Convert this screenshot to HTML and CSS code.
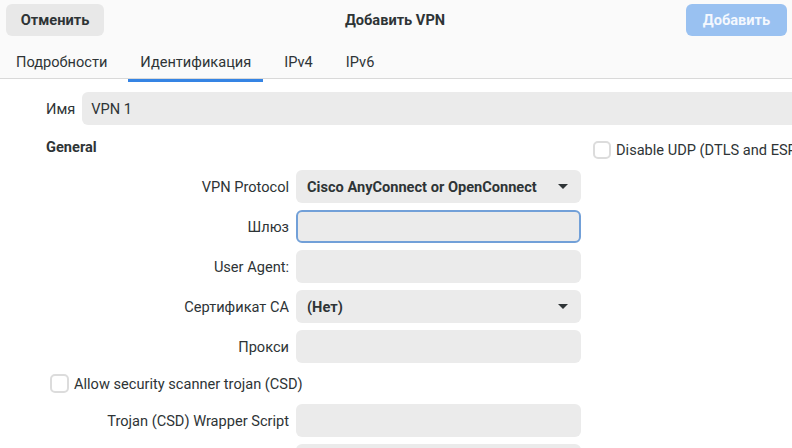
FILE: index.html
```html
<!DOCTYPE html>
<html lang="ru">
<head>
<meta charset="utf-8">
<title>Добавить VPN</title>
<link rel="stylesheet" href="styles.css">
</head>
<body>
<div class="window">
  <header class="header">
    <div class="titlebar">
      <button class="btn btn-cancel">Отменить</button>
      <div class="title">Добавить VPN</div>
      <button class="btn btn-add">Добавить</button>
    </div>
    <nav class="tabs">
      <div class="tab">Подробности</div>
      <div class="tab active">Идентификация</div>
      <div class="tab">IPv4</div>
      <div class="tab">IPv6</div>
    </nav>
  </header>
  <main class="content">
    <div class="name-row">
      <span class="label">Имя</span>
      <div class="entry name-entry">VPN 1</div>
    </div>
    <div class="general-row">
      <span class="section">General</span>
      <label class="check udp"><span class="box"></span><span>Disable UDP (DTLS and ESP)</span></label>
    </div>
    <div class="form">
      <span class="flabel">VPN Protocol</span>
      <div class="entry combo"><span class="combo-text">Cisco AnyConnect or OpenConnect</span><span class="arrow"></span></div>
      <span class="flabel">Шлюз</span>
      <div class="entry focused"></div>
      <span class="flabel">User Agent:</span>
      <div class="entry"></div>
      <span class="flabel">Сертификат CA</span>
      <div class="entry combo"><span class="combo-text">(Нет)</span><span class="arrow"></span></div>
      <span class="flabel">Прокси</span>
      <div class="entry"></div>
      <label class="check csd"><span class="box"></span><span>Allow security scanner trojan (CSD)</span></label>
      <span class="flabel">Trojan (CSD) Wrapper Script</span>
      <div class="entry"></div>
      <span class="flabel"></span>
      <div class="entry"></div>
    </div>
  </main>
</div>
</body>
</html>
```
FILE: styles.css
```css
html, body {
  margin: 0;
  padding: 0;
  width: 792px;
  height: 448px;
  overflow: hidden;
  background: #ffffff;
}
body {
  font-family: Roboto, "Noto Sans", "Liberation Sans", sans-serif;
  font-size: 14.6px;
  color: #2e3436;
}
.window {
  width: 792px;
  height: 448px;
  overflow: hidden;
}
.header {
  background: #fafafa;
  border-bottom: 1px solid #d9d9d9;
  height: 78px;
}
.titlebar {
  display: flex;
  align-items: center;
  height: 32px;
  padding: 4px 5px 0 6px;
}
.btn {
  height: 32px;
  border: none;
  border-radius: 6px;
  font-family: inherit;
  font-size: 14.6px;
  font-weight: 700;
  padding: 0;
}
.btn-cancel {
  width: 98px;
  background: #e8e8e8;
  color: #2e3436;
}
.btn-add {
  width: 101px;
  background: #99c1f1;
  color: #f4f8fe;
}
.title {
  flex: 1;
  text-align: center;
  font-weight: 700;
  color: #2e3436;
}
.tabs {
  display: flex;
  gap: 9px;
  padding-left: 4px;
  margin-top: 8px;
  height: 38px;
}
.tab {
  padding: 0 12px;
  display: flex;
  align-items: center;
  height: 35px;
  border-bottom: 3px solid transparent;
  color: #2e3436;
}
.tab.active {
  border-bottom-color: #3584e4;
}
.content {
  padding-top: 13px;
}
.name-row {
  display: flex;
  align-items: center;
  padding-left: 46px;
  gap: 7px;
  margin-right: -10px;
}
.entry {
  height: 33px;
  background: #ebebeb;
  border-radius: 6px;
  box-sizing: border-box;
  display: flex;
  align-items: center;
  padding: 0 11px;
}
.name-entry {
  flex: 1;
  padding-left: 9px;
}
.general-row {
  display: flex;
  align-items: center;
  height: 30px;
  margin-top: 10px;
  padding-left: 46px;
}
.section {
  font-weight: 700;
  width: 547px;
  flex: none;
  position: relative;
  top: -3px;
}
.check {
  display: flex;
  align-items: center;
  gap: 5px;
  white-space: nowrap;
  flex: none;
}
.box {
  width: 18px;
  height: 18px;
  box-sizing: border-box;
  border: 2px solid #dcdcdc;
  border-radius: 5px;
  background: #ffffff;
  flex: none;
}
.form {
  display: grid;
  grid-template-columns: 289px 285px;
  column-gap: 7px;
  row-gap: 7px;
  margin-top: 5px;
}
.flabel {
  text-align: right;
  align-self: center;
}
.combo {
  justify-content: space-between;
  font-weight: 700;
  padding-right: 13px;
}
.arrow {
  width: 0;
  height: 0;
  border-left: 5px solid transparent;
  border-right: 5px solid transparent;
  border-top: 5px solid #2e3436;
}
.focused {
  border: 2px solid #72a0d8;
}
.csd {
  grid-column: 1 / -1;
  height: 27px;
  padding-left: 50px;
}
.csd .box {
  width: 19px;
  height: 19px;
}
```
